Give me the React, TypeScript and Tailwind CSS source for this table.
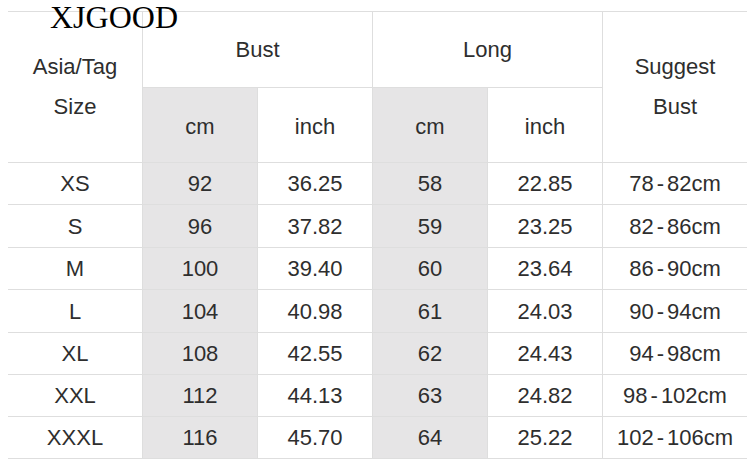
import React from "react";

const rows = [
  ["XS", "92", "36.25", "58", "22.85", "78-82cm"],
  ["S", "96", "37.82", "59", "23.25", "82-86cm"],
  ["M", "100", "39.40", "60", "23.64", "86-90cm"],
  ["L", "104", "40.98", "61", "24.03", "90-94cm"],
  ["XL", "108", "42.55", "62", "24.43", "94-98cm"],
  ["XXL", "112", "44.13", "63", "24.82", "98-102cm"],
  ["XXXL", "116", "45.70", "64", "25.22", "102-106cm"],
];

function Range({ text }: { text: string }) {
  const [a, b] = text.split("-");
  return (
    <span>
      {a}
      <span className="px-[3px]">-</span>
      {b}
    </span>
  );
}

export default function App() {
  return (
    <div
      className="relative w-[754px] h-[471px] bg-white text-[#2e2e2e] overflow-hidden"
      style={{ fontFamily: '"Liberation Sans", Arial, sans-serif' }}
    >
      <div className="pt-[11px] pl-[8px]">
        <div className="w-[739px] border-y border-[#dedede] bg-[#dedede] grid grid-cols-[134px_114px_114px_114px_114px_144px] grid-rows-[75px_74px_41px_42px_41px_42px_41px_41px_41px] gap-px text-[22px]">
          <div className="row-span-2 bg-white flex flex-col items-center justify-center leading-[40px]">
            <span>Asia/Tag</span>
            <span>Size</span>
          </div>
          <div className="col-span-2 bg-white flex items-center justify-center">Bust</div>
          <div className="col-span-2 bg-white flex items-center justify-center">Long</div>
          <div className="row-span-2 bg-white flex flex-col items-center justify-center leading-[40px]">
            <span>Suggest</span>
            <span>Bust</span>
          </div>
          <div className="bg-[#e6e5e6] flex items-center justify-center pt-[3px]">cm</div>
          <div className="bg-white flex items-center justify-center pt-[3px]">inch</div>
          <div className="bg-[#e6e5e6] flex items-center justify-center pt-[3px]">cm</div>
          <div className="bg-white flex items-center justify-center pt-[3px]">inch</div>
          {rows.map((r) =>
            r.map((c, i) => (
              <div
                key={r[0] + i}
                className={
                  (i === 1 || i === 3 ? "bg-[#e6e5e6]" : "bg-white") +
                  " flex items-center justify-center"
                }
              >
                {i === 5 ? <Range text={c} /> : c}
              </div>
            ))
          )}
        </div>
      </div>
      <div
        className="absolute left-[50px] top-[1px] text-[32px] leading-none text-black"
        style={{ fontFamily: '"Liberation Serif", "Times New Roman", serif' }}
      >
        XJGOOD
      </div>
    </div>
  );
}
